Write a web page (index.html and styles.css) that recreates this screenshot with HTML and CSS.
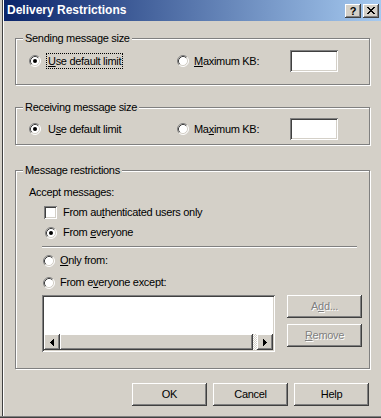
FILE: index.html
```html
<!DOCTYPE html>
<html>
<head>
<meta charset="utf-8">
<link rel="stylesheet" href="styles.css">
</head>
<body>
<div class="window">
  <div class="titlebar">
    <span class="title">Delivery Restrictions</span>
    <div class="caption-btns">
      <span class="cbtn help">?</span>
      <span class="cbtn close"><svg width="8" height="7" viewBox="0 0 8 7"><path fill="#000" d="M0 0h2v1H0z M6 0h2v1H6z M1 1h2v1H1z M5 1h2v1H5z M2 2h4v1H2z M3 3h2v1H3z M2 4h4v1H2z M1 5h2v1H1z M5 5h2v1H5z M0 6h2v1H0z M6 6h2v1H6z"/></svg></span>
    </div>
  </div>

  <div class="client">
    <fieldset class="group g-send">
      <legend>Sending message size</legend>
      <div class="size-row">
        <div class="opt opt-default"><svg class="radio" viewBox="0 0 12 12"><use href="#radio-on"/></svg><span class="lbl focus"><u>U</u>se default limit</span></div>
        <div class="opt opt-max"><svg class="radio" viewBox="0 0 12 12"><use href="#radio"/></svg><span class="lbl"><u>M</u>aximum KB:</span></div>
        <span class="field"></span>
      </div>
    </fieldset>

    <fieldset class="group g-recv">
      <legend>Receiving message size</legend>
      <div class="size-row">
        <div class="opt opt-default"><svg class="radio" viewBox="0 0 12 12"><use href="#radio-on"/></svg><span class="lbl">U<u>s</u>e default limit</span></div>
        <div class="opt opt-max"><svg class="radio" viewBox="0 0 12 12"><use href="#radio"/></svg><span class="lbl">Ma<u>x</u>imum KB:</span></div>
        <span class="field"></span>
      </div>
    </fieldset>

    <fieldset class="group g-msg">
      <legend>Message restrictions</legend>
      <div class="row accept">Accept messages:</div>
      <div class="row check-row"><span class="checkbox"></span><span>From au<u>t</u>henticated users only</span></div>
      <div class="row everyone"><svg class="radio" viewBox="0 0 12 12"><use href="#radio-on"/></svg><span>From <u>e</u>veryone</span></div>
      <div class="separator"></div>
      <div class="row only"><svg class="radio" viewBox="0 0 12 12"><use href="#radio"/></svg><span><u>O</u>nly from:</span></div>
      <div class="row except"><svg class="radio" viewBox="0 0 12 12"><use href="#radio"/></svg><span>From e<u>v</u>eryone except:</span></div>
      <div class="list-row">
        <div class="listbox">
          <div class="list-items"></div>
          <div class="hscroll">
            <span class="sbtn"><svg width="4" height="7" viewBox="0 0 4 7"><path fill="#000" d="M3 0h1v7H3z M2 1h1v5H2z M1 2h1v3H1z M0 3h1v1H0z"/></svg></span>
            <span class="thumb"></span>
            <span class="track"></span>
            <span class="sbtn"><svg width="4" height="7" viewBox="0 0 4 7"><path fill="#000" d="M0 0h1v7H0z M1 1h1v5H1z M2 2h1v3H2z M3 3h1v1H3z"/></svg></span>
          </div>
        </div>
        <div class="side-btns">
          <span class="btn disabled">A<u>d</u>d...</span>
          <span class="btn disabled"><u>R</u>emove</span>
        </div>
      </div>
    </fieldset>

    <div class="dialog-btns">
      <span class="btn">OK</span>
      <span class="btn">Cancel</span>
      <span class="btn">Help</span>
    </div>
  </div>
</div>

<svg class="defs" width="0" height="0">
  <defs>
    <symbol id="radio" viewBox="0 0 12 12">
      <circle cx="6" cy="6" r="5" fill="#fff"/>
      <path d="M2.11 9.89A5.5 5.5 0 0 1 9.89 2.11" fill="none" stroke="#808080"/>
      <path d="M9.89 2.11A5.5 5.5 0 0 1 2.11 9.89" fill="none" stroke="#fff"/>
      <path d="M2.82 9.18A4.5 4.5 0 0 1 9.18 2.82" fill="none" stroke="#404040"/>
      <path d="M9.18 2.82A4.5 4.5 0 0 1 2.82 9.18" fill="none" stroke="#d4d0c8"/>
    </symbol>
    <symbol id="radio-on" viewBox="0 0 12 12">
      <circle cx="6" cy="6" r="5" fill="#fff"/>
      <path d="M2.11 9.89A5.5 5.5 0 0 1 9.89 2.11" fill="none" stroke="#808080"/>
      <path d="M9.89 2.11A5.5 5.5 0 0 1 2.11 9.89" fill="none" stroke="#fff"/>
      <path d="M2.82 9.18A4.5 4.5 0 0 1 9.18 2.82" fill="none" stroke="#404040"/>
      <path d="M9.18 2.82A4.5 4.5 0 0 1 2.82 9.18" fill="none" stroke="#d4d0c8"/>
      <circle cx="6" cy="6" r="2" fill="#000"/>
    </symbol>
  </defs>
</svg>
</body>
</html>
```

FILE: styles.css
```css
* { box-sizing: border-box; }
html, body { margin: 0; padding: 0; }
body {
  width: 381px;
  height: 418px;
  overflow: hidden;
  background: #d4d0c8;
  color: #000;
  font-family: "Liberation Sans", Arial, sans-serif;
  font-size: 11px;
  line-height: 13px;
  letter-spacing: -0.3px;
}
u { text-decoration: underline; text-underline-offset: 1px; }

.window {
  height: 418px;
  padding-left: 4px;
  display: flex;
  flex-direction: column;
  background: linear-gradient(to right, #d4d0c8 0 2px, #404040 2px 3px, #ffffff 3px 4px, #d4d0c8 4px);
  box-shadow: inset 0 -1px 0 #404040, inset 0 -2px 0 #808080;
}

/* title bar */
.titlebar {
  flex: none;
  height: 21px;
  display: flex;
  align-items: center;
  padding: 0 2px 0 3px;
  background: linear-gradient(to right, #0a246a, #a6caf0);
}
.title {
  flex: 1;
  color: #fff;
  font-weight: bold;
  font-size: 12px;
  letter-spacing: 0;
}
.caption-btns { display: flex; gap: 2px; }
.cbtn {
  width: 16px;
  height: 14px;
  display: flex;
  align-items: center;
  justify-content: center;
  background: #d4d0c8;
  box-shadow: inset -1px -1px 0 #404040, inset 1px 1px 0 #fff, inset -2px -2px 0 #808080;
}
.cbtn.help { font-weight: bold; font-size: 11px; letter-spacing: 0; padding-top: 1px; }

/* client */
.client {
  flex: 1;
  display: flex;
  flex-direction: column;
  padding: 0 11px;
}

.group {
  margin: 0;
  padding: 0;
  min-inline-size: 0;
  border: 1px solid #808080;
  box-shadow: inset 1px 1px 0 #fff, 1px 1px 0 #fff;
}
.group legend {
  margin-left: 7px;
  padding: 0 2px;
  height: 13px;
  line-height: 13px;
  background: #d4d0c8;
}
.g-send { margin-top: 11px; padding-bottom: 12px; }
.g-send .size-row { margin-top: 5px; }
.g-recv { margin-top: 16px; padding-bottom: 4px; }
.g-recv .size-row { margin-top: 4px; }
.g-msg { margin-top: 19px; padding-bottom: 16px; }

.size-row {
  display: flex;
  align-items: center;
  height: 22px;
  padding-left: 13px;
}
.opt { display: flex; align-items: center; }
.opt-default { width: 148px; gap: 5px; }
.opt-max { width: 113px; gap: 3px; }
.radio { width: 12px; height: 12px; flex: none; display: block; }
.lbl {
  border: 1px solid transparent;
  padding: 1px 1px 0;
  height: 16px;
}
.lbl.focus { border: 1px dotted #000; }

.field {
  width: 48px;
  height: 22px;
  background: #fff;
  box-shadow: inset 1px 1px 0 #808080, inset -1px -1px 0 #fff, inset 2px 2px 0 #404040, inset -2px -2px 0 #d4d0c8;
}

/* message restrictions */
.row { display: flex; align-items: center; height: 13px; }
.accept { margin-top: 9px; padding-left: 13px; }
.check-row { margin-top: 7px; padding-left: 28px; gap: 6px; }
.everyone { margin-top: 7px; padding-left: 29px; gap: 6px; }
.only { margin-top: 6px; padding-left: 27px; gap: 5px; }
.except { margin-top: 9px; padding-left: 27px; gap: 5px; }
.checkbox {
  width: 13px;
  height: 13px;
  flex: none;
  background: #fff;
  box-shadow: inset 1px 1px 0 #808080, inset -1px -1px 0 #fff, inset 2px 2px 0 #404040, inset -2px -2px 0 #d4d0c8;
}
.separator {
  margin: 7px 0 0 26px;
  width: 315px;
  height: 2px;
  border-top: 1px solid #808080;
  border-bottom: 1px solid #fff;
}

.list-row {
  margin-top: 6px;
  padding-left: 26px;
  display: flex;
  align-items: flex-start;
}
.listbox {
  width: 233px;
  height: 57px;
  padding: 2px;
  display: flex;
  flex-direction: column;
  background: #fff;
  box-shadow: inset 1px 1px 0 #808080, inset -1px -1px 0 #fff, inset 2px 2px 0 #404040, inset -2px -2px 0 #d4d0c8;
}
.list-items { flex: 1; }
.hscroll { height: 16px; display: flex; }
.sbtn {
  width: 16px;
  height: 16px;
  flex: none;
  display: flex;
  align-items: center;
  justify-content: center;
  background: #d4d0c8;
  box-shadow: inset -1px -1px 0 #404040, inset 1px 1px 0 #fff, inset -2px -2px 0 #808080;
}
.thumb {
  flex: 1;
  height: 16px;
  background: #d4d0c8;
  box-shadow: inset -1px -1px 0 #404040, inset 1px 1px 0 #fff, inset -2px -2px 0 #808080;
}
.track {
  width: 4px;
  height: 16px;
  background: repeating-conic-gradient(#fff 0 25%, #d4d0c8 0 50%) 0 0 / 2px 2px;
}
.side-btns {
  margin-left: 12px;
  display: flex;
  flex-direction: column;
  gap: 6px;
}

.btn {
  width: 75px;
  height: 23px;
  display: flex;
  align-items: center;
  justify-content: center;
  background: #d4d0c8;
  box-shadow: inset -1px -1px 0 #404040, inset 1px 1px 0 #fff, inset -2px -2px 0 #808080;
}
.btn.disabled { color: #808080; text-shadow: 1px 1px 0 #fff; }

.dialog-btns {
  margin-top: 14px;
  padding-right: 1px;
  display: flex;
  justify-content: flex-end;
  gap: 6px;
}

.defs { display: block; width: 0; height: 0; overflow: hidden; }
```
